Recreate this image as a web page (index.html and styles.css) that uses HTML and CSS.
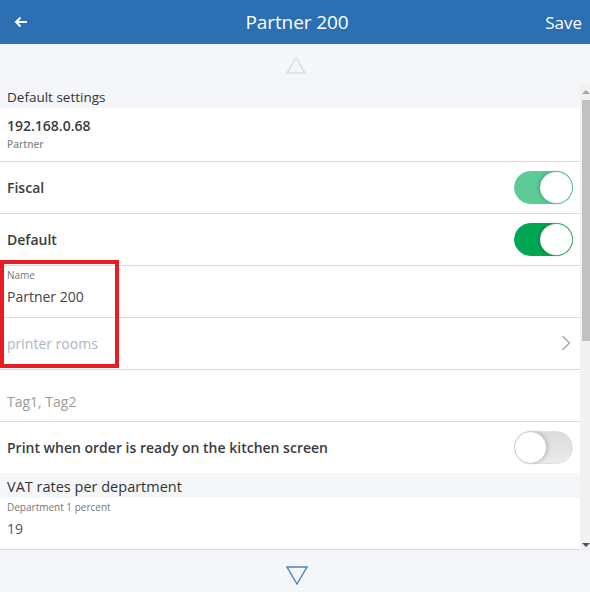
FILE: index.html
```html
<!DOCTYPE html>
<html>
<head>
<meta charset="utf-8">
<link rel="stylesheet" href="styles.css">
</head>
<body>
<div class="app">
  <header class="topbar">
    <span class="back">
      <svg width="14" height="12" viewBox="0 0 14 12"><path d="M13 6H2M6.5 1.5L2 6l4.5 4.5" fill="none" stroke="#fff" stroke-width="2"/></svg>
    </span>
    <h1 class="title">Partner 200</h1>
    <span class="save">Save</span>
  </header>
  <div class="pager">
    <svg width="20" height="17" viewBox="0 0 20 17"><path d="M10 1L1 16h18z" fill="none" stroke="#d3dfe2" stroke-width="1.4"/></svg>
  </div>
  <div class="main">
    <div class="list">
      <div class="section">Default settings</div>
      <div class="row row-tall">
        <div class="stack">
          <span class="strong">192.168.0.68</span>
          <span class="sub">Partner</span>
        </div>
      </div>
      <div class="row">
        <span class="strong">Fiscal</span>
        <span class="toggle on light"><span class="knob"></span></span>
      </div>
      <div class="row">
        <span class="strong">Default</span>
        <span class="toggle on"><span class="knob"></span></span>
      </div>
      <div class="highlight-wrap">
        <div class="row field">
          <span class="label">Name</span>
          <span class="value">Partner 200</span>
        </div>
        <div class="row">
          <span class="placeholder-blue">printer rooms</span>
          <svg class="chev" width="10" height="16" viewBox="0 0 10 16"><path d="M1.5 1l7 7-7 7" fill="none" stroke="#9aa0a4" stroke-width="1.2"/></svg>
        </div>
        <div class="redbox"></div>
      </div>
      <div class="row">
        <span class="placeholder">Tag1, Tag2</span>
      </div>
      <div class="row noborder">
        <span class="strong">Print when order is ready on the kitchen screen</span>
        <span class="toggle off"><span class="knob"></span></span>
      </div>
      <div class="section section-2">VAT rates per department</div>
      <div class="row field">
        <span class="label">Department 1 percent</span>
        <span class="value light">19</span>
      </div>
    </div>
    <div class="scrollbar">
      <div class="sb-arrow up"></div>
      <div class="sb-track"><div class="sb-thumb"></div></div>
      <div class="sb-arrow down"></div>
    </div>
  </div>
  <div class="pager bottom">
    <svg width="22" height="19" viewBox="0 0 22 19"><path d="M1 1h20L11 18z" fill="none" stroke="#4a86c2" stroke-width="1.4"/></svg>
  </div>
</div>
</body>
</html>
```
FILE: styles.css
```css
html, body {
  margin: 0;
  padding: 0;
}
body {
  width: 590px;
  height: 592px;
  overflow: hidden;
  background: #f4f6fa;
  font-family: "Open Sans", "DejaVu Sans", sans-serif;
  color: #333;
}
.app {
  display: flex;
  flex-direction: column;
  height: 592px;
}
.topbar {
  height: 44px;
  flex: none;
  background: #2c6fb3;
  color: #fff;
  display: flex;
  align-items: center;
  justify-content: space-between;
  padding: 0 8px 0 14px;
}
.back {
  display: flex;
  width: 50px;
}
.title {
  margin: 0 0 0 10px;
  font-size: 19px;
  font-weight: 400;
  letter-spacing: -0.1px;
}
.save {
  font-size: 17px;
  width: 62px;
  text-align: right;
}
.pager {
  height: 40px;
  flex: none;
  display: flex;
  align-items: center;
  justify-content: center;
  padding-left: 2px;
}
.pager svg { margin-top: 2px; }
.pager.bottom {
  height: 41px;
}
.pager.bottom svg { margin-top: 8px; margin-left: 2px; }
.main {
  height: 467px;
  flex: none;
  display: flex;
}
.list {
  flex: 1;
  overflow: hidden;
  display: flex;
  flex-direction: column;
}
.section {
  height: 24px;
  flex: none;
  padding: 0 7px;
  display: flex;
  align-items: center;
  font-size: 13.5px;
  background: #f4f6fa;
  padding-top: 2px;
  box-sizing: border-box;
}
.section-2 {
  height: 25px;
  font-size: 14.5px;
  padding-top: 1px;
}
.row {
  height: 52px;
  flex: none;
  box-sizing: border-box;
  background: #fff;
  border-bottom: 1px solid #d5dde3;
  display: flex;
  align-items: center;
  justify-content: space-between;
  padding: 0 7px;
}
.row-tall { height: 54px; }
.noborder { border-bottom: none; height: 51px; }
.stack {
  display: flex;
  flex-direction: column;
  margin-top: -2px;
}
.strong {
  font-size: 14px;
  font-weight: 600;
  color: #3c3c3c;
}
.sub {
  font-size: 10px;
  font-weight: 600;
  color: #8a8a8a;
  margin-top: 2px;
}
.field {
  flex-direction: column;
  align-items: flex-start;
  justify-content: flex-start;
}
.label {
  font-size: 10px;
  color: #777;
  margin-top: 2px;
}
.value {
  font-size: 14px;
  color: #444;
  margin-top: 5px;
}
.value.light { color: #555; }
.placeholder-blue {
  font-size: 14px;
  color: #a9b7c0;
  margin-top: -1px;
}
.placeholder {
  font-size: 14px;
  color: #9b9b9b;
  margin-top: 12px;
}
.chev { margin-right: 2px; margin-top: -2px; }
.toggle {
  width: 59px;
  height: 33px;
  box-sizing: border-box;
  border-radius: 17px;
  display: flex;
  align-items: center;
  flex: none;
  margin-right: 0;
}
.toggle.on {
  background: #00a752;
  border: 1px solid #00a752;
  justify-content: flex-end;
}
.toggle.on.light {
  background: #5ccb95;
  border-color: #5ccb95;
}
.toggle.off {
  background: linear-gradient(#dcdcdc, #ebebeb);
  border: 1px solid #e0e0e0;
  justify-content: flex-start;
}
.knob {
  width: 33px;
  height: 33px;
  box-sizing: border-box;
  border-radius: 50%;
  background: #fff;
  margin: -1px;
  box-shadow: -2px 0 2px rgba(0,0,0,0.12);
}
.toggle.on .knob { border: 1px solid #3eaa6e; border-left: none; box-shadow: -2px 0 3px rgba(0,0,0,0.15); }
.toggle.on.light .knob { border-color: #62c08f; }
.toggle.off .knob { border: 1px solid #bcd0cf; box-shadow: 2px 0 3px rgba(0,0,0,0.12); }
.highlight-wrap {
  position: relative;
  display: flex;
  flex-direction: column;
}
.redbox {
  position: absolute;
  left: 0;
  top: -6px;
  width: 119px;
  height: 108px;
  box-sizing: border-box;
  border: 4px solid #e91c24;
  pointer-events: none;
}
.scrollbar {
  width: 10px;
  flex: none;
  background: #f1f1f1;
  display: flex;
  flex-direction: column;
  height: 467px;
}
.sb-arrow {
  height: 16px;
  flex: none;
  position: relative;
}
.sb-arrow.up::after, .sb-arrow.down::after {
  content: "";
  position: absolute;
  left: 2px;
  width: 0;
  height: 0;
  border-left: 4px solid transparent;
  border-right: 4px solid transparent;
}
.sb-arrow.up::after {
  top: 6px;
  border-bottom: 4px solid #a3a3a3;
}
.sb-arrow.down::after {
  bottom: 4px;
  border-top: 4px solid #505050;
}
.sb-track {
  flex: 1;
  padding: 0 0 0 2px;
}
.sb-thumb {
  height: 241px;
  background: #c1c1c1;
}
```
